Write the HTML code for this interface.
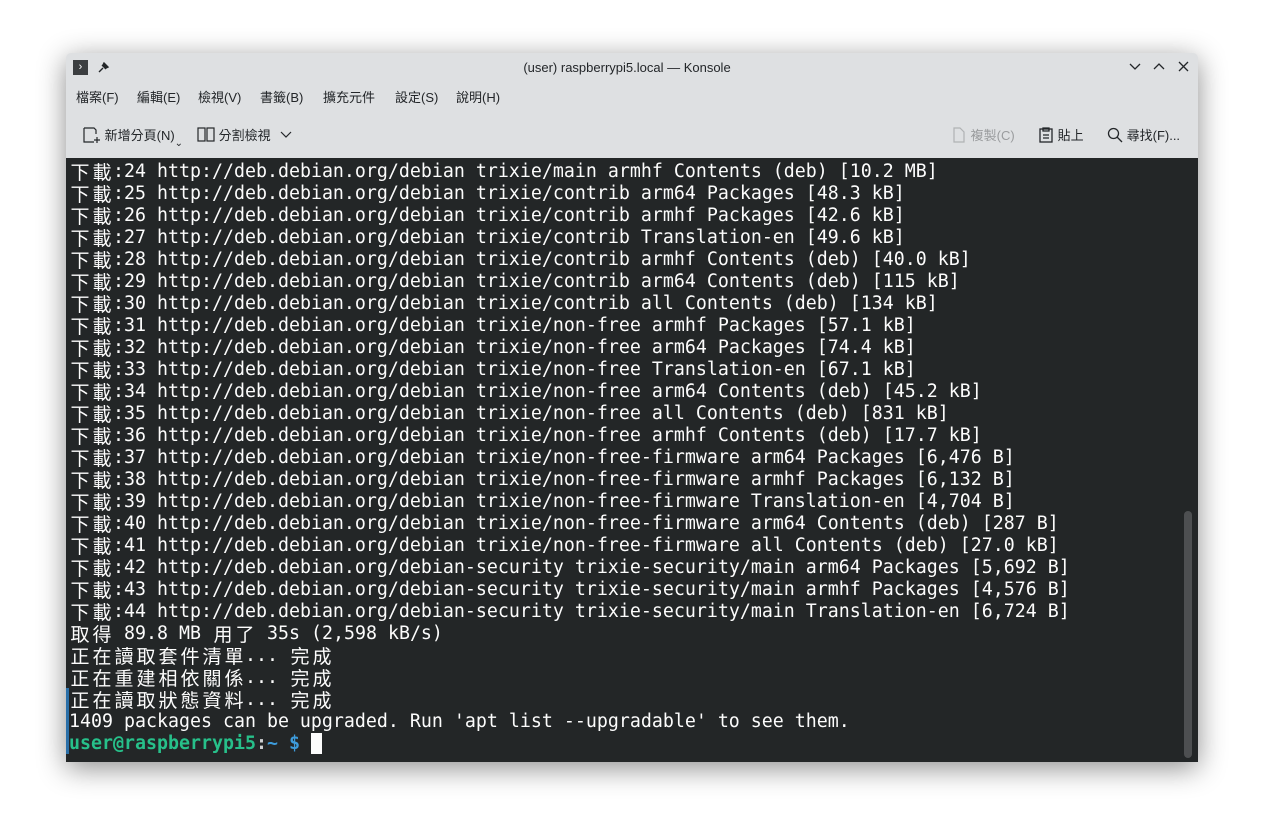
<!DOCTYPE html>
<html><head><meta charset="utf-8"><style>
body{margin:0;width:1264px;height:840px;background:#fff;overflow:hidden;font-family:"Liberation Sans","Noto Sans CJK TC",sans-serif;}
.win{position:absolute;left:66px;top:53px;width:1132px;height:709px;background:#dee0e2;box-shadow:0 6px 28px rgba(0,0,0,.45);border-radius:5px 5px 0 0;overflow:hidden}
.title{position:absolute;left:0;top:1px;width:1122px;height:28px;text-align:center;font-size:13px;line-height:28px;color:#232629}
.m{position:absolute;top:35px;font-size:13px;color:#232629;line-height:20px}
.tb{position:absolute;top:72px;font-size:13px;color:#232629;line-height:22px}
.term{position:absolute;left:0;top:105px;width:1132px;height:604px;background:#232627}
.lines{position:absolute;left:3px;top:3px;font-family:"DejaVu Sans Mono","Liberation Mono","Noto Sans CJK TC",monospace;font-size:18.27px;color:#fcfcfc;white-space:pre;line-height:22px}
.c{display:inline-block;width:22px;height:22px;vertical-align:top;overflow:hidden;text-align:center;font-family:"Noto Sans CJK TC",sans-serif;font-size:19px;line-height:22px}
.sb{position:absolute;left:1118px;top:353px;width:8px;height:247px;border-radius:4px;background:#4d4f51}
</style></head><body>
<div class="win">
 <div class="title">(user) raspberrypi5.local — Konsole</div>
 <div style="position:absolute;left:7px;top:7px;width:15px;height:15px;background:#3b3e40;color:#fff;font-size:11px;line-height:15px;text-align:center">›</div>
 <svg style="position:absolute;left:31px;top:7px" width="14" height="14" fill="none" stroke="#232629" stroke-width="1.4"><path d="M2 12l4-4M5 5l4 4M7 3l4 4-2 1-3-3z" fill="#232629"/></svg>
 <svg style="position:absolute;left:1062px;top:8px" width="64" height="12" fill="none" stroke="#232629" stroke-width="1.3"><path d="M2 3l5 5 5-5"/><path d="M26 8l5-5 5 5"/><path d="M51 1l9 9M60 1l-9 9"/></svg>
 <div class="m" style="left:10px">檔案(F)</div>
 <div class="m" style="left:71px">編輯(E)</div>
 <div class="m" style="left:132px">檢視(V)</div>
 <div class="m" style="left:194px">書籤(B)</div>
 <div class="m" style="left:257px">擴充元件</div>
 <div class="m" style="left:329px">設定(S)</div>
 <div class="m" style="left:390px">說明(H)</div>
 <div class="tb" style="left:17px"><svg width="18" height="16" style="vertical-align:-3px" fill="none" stroke="#232629" stroke-width="1.2"><path d="M1 1h10l2 2v4M1 1v14h10M14 10v6M11 13h6"/></svg> 新增分頁(N)<span style="font-size:10px;vertical-align:-6px">⌄</span></div>
 <div class="tb" style="left:131px"><svg width="18" height="16" style="vertical-align:-3px" fill="none" stroke="#232629" stroke-width="1.2"><rect x="1" y="1" width="7" height="13"/><rect x="10" y="1" width="7" height="13"/></svg> 分割檢視 <svg width="12" height="8" style="margin-left:6px;vertical-align:1px" fill="none" stroke="#232629" stroke-width="1.2"><path d="M1 1l5 5 5-5"/></svg></div>
 <div class="tb" style="left:885px;color:#9a9c9e"><svg width="16" height="16" style="vertical-align:-3px" fill="none" stroke="#b0b2b4" stroke-width="1.2"><path d="M3 1h6l4 4v10H3z"/></svg> 複製(C)</div>
 <div class="tb" style="left:972px"><svg width="16" height="16" style="vertical-align:-3px" fill="none" stroke="#232629" stroke-width="1.3"><rect x="2" y="2" width="12" height="13"/><path d="M5 1h6v3H5zM5 8h6M5 11h6"/></svg> 貼上</div>
 <div class="tb" style="left:1041px"><svg width="16" height="16" style="vertical-align:-3px" fill="none" stroke="#232629" stroke-width="1.3"><circle cx="6.5" cy="6.5" r="5"/><path d="M10 10l5 5"/></svg> 尋找(F)...</div>
 <div class="term">
  <div style="position:absolute;left:0;top:530px;width:3px;height:66px;background:#2a6fa8"></div>
  <div class="lines"><span class="c">下</span><span class="c">載</span>:24 http://deb.debian.org/debian trixie/main armhf Contents (deb) [10.2 MB]
<span class="c">下</span><span class="c">載</span>:25 http://deb.debian.org/debian trixie/contrib arm64 Packages [48.3 kB]
<span class="c">下</span><span class="c">載</span>:26 http://deb.debian.org/debian trixie/contrib armhf Packages [42.6 kB]
<span class="c">下</span><span class="c">載</span>:27 http://deb.debian.org/debian trixie/contrib Translation-en [49.6 kB]
<span class="c">下</span><span class="c">載</span>:28 http://deb.debian.org/debian trixie/contrib armhf Contents (deb) [40.0 kB]
<span class="c">下</span><span class="c">載</span>:29 http://deb.debian.org/debian trixie/contrib arm64 Contents (deb) [115 kB]
<span class="c">下</span><span class="c">載</span>:30 http://deb.debian.org/debian trixie/contrib all Contents (deb) [134 kB]
<span class="c">下</span><span class="c">載</span>:31 http://deb.debian.org/debian trixie/non-free armhf Packages [57.1 kB]
<span class="c">下</span><span class="c">載</span>:32 http://deb.debian.org/debian trixie/non-free arm64 Packages [74.4 kB]
<span class="c">下</span><span class="c">載</span>:33 http://deb.debian.org/debian trixie/non-free Translation-en [67.1 kB]
<span class="c">下</span><span class="c">載</span>:34 http://deb.debian.org/debian trixie/non-free arm64 Contents (deb) [45.2 kB]
<span class="c">下</span><span class="c">載</span>:35 http://deb.debian.org/debian trixie/non-free all Contents (deb) [831 kB]
<span class="c">下</span><span class="c">載</span>:36 http://deb.debian.org/debian trixie/non-free armhf Contents (deb) [17.7 kB]
<span class="c">下</span><span class="c">載</span>:37 http://deb.debian.org/debian trixie/non-free-firmware arm64 Packages [6,476 B]
<span class="c">下</span><span class="c">載</span>:38 http://deb.debian.org/debian trixie/non-free-firmware armhf Packages [6,132 B]
<span class="c">下</span><span class="c">載</span>:39 http://deb.debian.org/debian trixie/non-free-firmware Translation-en [4,704 B]
<span class="c">下</span><span class="c">載</span>:40 http://deb.debian.org/debian trixie/non-free-firmware arm64 Contents (deb) [287 B]
<span class="c">下</span><span class="c">載</span>:41 http://deb.debian.org/debian trixie/non-free-firmware all Contents (deb) [27.0 kB]
<span class="c">下</span><span class="c">載</span>:42 http://deb.debian.org/debian-security trixie-security/main arm64 Packages [5,692 B]
<span class="c">下</span><span class="c">載</span>:43 http://deb.debian.org/debian-security trixie-security/main armhf Packages [4,576 B]
<span class="c">下</span><span class="c">載</span>:44 http://deb.debian.org/debian-security trixie-security/main Translation-en [6,724 B]
<span class="c">取</span><span class="c">得</span> 89.8 MB <span class="c">用</span><span class="c">了</span> 35s (2,598 kB/s)
<span class="c">正</span><span class="c">在</span><span class="c">讀</span><span class="c">取</span><span class="c">套</span><span class="c">件</span><span class="c">清</span><span class="c">單</span>... <span class="c">完</span><span class="c">成</span>
<span class="c">正</span><span class="c">在</span><span class="c">重</span><span class="c">建</span><span class="c">相</span><span class="c">依</span><span class="c">關</span><span class="c">係</span>... <span class="c">完</span><span class="c">成</span>
<span class="c">正</span><span class="c">在</span><span class="c">讀</span><span class="c">取</span><span class="c">狀</span><span class="c">態</span><span class="c">資</span><span class="c">料</span>... <span class="c">完</span><span class="c">成</span>
1409 packages can be upgraded. Run 'apt list --upgradable' to see them.
<b style="color:#27c08a">user@raspberrypi5</b><b style="color:#cfd1d3">:</b><b style="color:#3d9bdb">~ $</b> <span style="background:#fcfcfc"> </span></div>
  <div class="sb"></div>
 </div>
</div>
</body></html>
